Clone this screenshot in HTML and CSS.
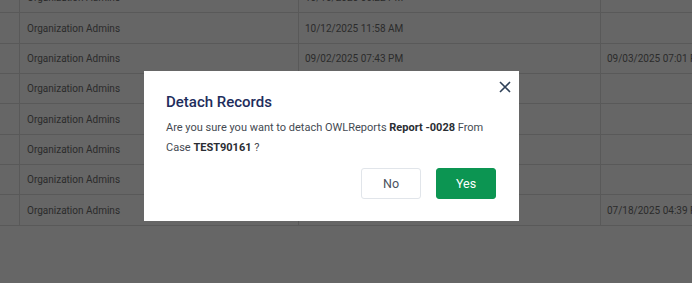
FILE: index.html
```html
<!DOCTYPE html>
<html lang="en">
<head>
  <meta charset="UTF-8" />
  <title>Detach Records</title>
  <link rel="stylesheet" href="styles.css">
</head>
<body>
  <div class="table">
    <div class="row">
      <div class="cell gutter"></div>
      <div class="cell role">Organization Admins</div>
      <div class="cell date">10/10/2025 06:22 PM</div>
      <div class="cell date last"></div>
    </div>
    <div class="row">
      <div class="cell gutter"></div>
      <div class="cell role">Organization Admins</div>
      <div class="cell date">10/12/2025 11:58 AM</div>
      <div class="cell date last"></div>
    </div>
    <div class="row">
      <div class="cell gutter"></div>
      <div class="cell role">Organization Admins</div>
      <div class="cell date">09/02/2025 07:43 PM</div>
      <div class="cell date last">09/03/2025 07:01 PM</div>
    </div>
    <div class="row">
      <div class="cell gutter"></div>
      <div class="cell role">Organization Admins</div>
      <div class="cell date"></div>
      <div class="cell date last"></div>
    </div>
    <div class="row">
      <div class="cell gutter"></div>
      <div class="cell role">Organization Admins</div>
      <div class="cell date"></div>
      <div class="cell date last"></div>
    </div>
    <div class="row">
      <div class="cell gutter"></div>
      <div class="cell role">Organization Admins</div>
      <div class="cell date"></div>
      <div class="cell date last"></div>
    </div>
    <div class="row">
      <div class="cell gutter"></div>
      <div class="cell role">Organization Admins</div>
      <div class="cell date"></div>
      <div class="cell date last"></div>
    </div>
    <div class="row">
      <div class="cell gutter"></div>
      <div class="cell role">Organization Admins</div>
      <div class="cell date"></div>
      <div class="cell date last">07/18/2025 04:39 PM</div>
    </div>
  </div>

  <div class="modal">
    <button class="close" aria-label="Close">
      <svg width="12" height="12" viewBox="0 0 12 12">
        <path d="M1 1 L11 11 M11 1 L1 11" stroke="#2f4158" stroke-width="1.6" fill="none" />
      </svg>
    </button>
    <h2 class="modal-title">Detach Records</h2>
    <p class="modal-text">Are you sure you want to detach OWLReports <b>Report -0028</b> From Case <b>TEST90161</b> ?</p>
    <div class="modal-actions">
      <button class="btn btn-no">No</button>
      <button class="btn btn-yes">Yes</button>
    </div>
  </div>
</body>
</html>
```

FILE: styles.css
```css
html, body {
  margin: 0;
  padding: 0;
  height: 100%;
  overflow: hidden;
}

body {
  background-color: #666666;
  font-family: Roboto, "Noto Sans", sans-serif;
  position: relative;
}

.table {
  margin-top: -17px;
}

.row {
  display: flex;
  height: 30.35px;
  box-sizing: border-box;
  border-bottom: 1px solid #595959;
}

.cell {
  display: flex;
  align-items: center;
  flex-shrink: 0;
  box-sizing: border-box;
  font-size: 10px;
  color: #2b2b2b;
  white-space: nowrap;
  overflow: hidden;
}

.gutter {
  width: 20px;
  border-right: 1px solid #595959;
}

.role {
  width: 279px;
  padding-left: 7px;
  border-right: 1px solid #595959;
}

.date {
  width: 302px;
  padding-left: 6px;
  border-right: 1px solid #595959;
}

.date.last {
  flex: 1;
  width: auto;
  min-width: 0;
  border-right: none;
}

.modal {
  position: absolute;
  left: 144px;
  top: 71px;
  width: 375px;
  height: 150px;
  box-sizing: border-box;
  background: #fff;
  padding: 20px 23px 22px 22px;
}

.close {
  position: absolute;
  top: 10px;
  right: 8px;
  border: none;
  background: none;
  padding: 0;
  width: 12px;
  height: 12px;
  cursor: pointer;
}

.close svg {
  display: block;
}

.modal-title {
  margin: 0;
  font-size: 15px;
  font-weight: 500;
  color: #1e2d5c;
  line-height: 22px;
}

.modal-text {
  margin: 5px 0 0;
  font-size: 11px;
  line-height: 20px;
  color: #444a52;
}

.modal-text b {
  color: #2a2d33;
  font-weight: 700;
}

.modal-actions {
  display: flex;
  justify-content: flex-end;
  gap: 15px;
  margin-top: 10px;
}

.btn {
  width: 60px;
  height: 31px;
  border-radius: 3px;
  font-family: Roboto, "Noto Sans", sans-serif;
  font-size: 12.5px;
  cursor: pointer;
}

.btn-no {
  background: #fff;
  border: 1px solid #e1e5ea;
  color: #4a5260;
}

.btn-yes {
  background: #0c9552;
  border: 1px solid #0c9552;
  color: #fff;
}
```
